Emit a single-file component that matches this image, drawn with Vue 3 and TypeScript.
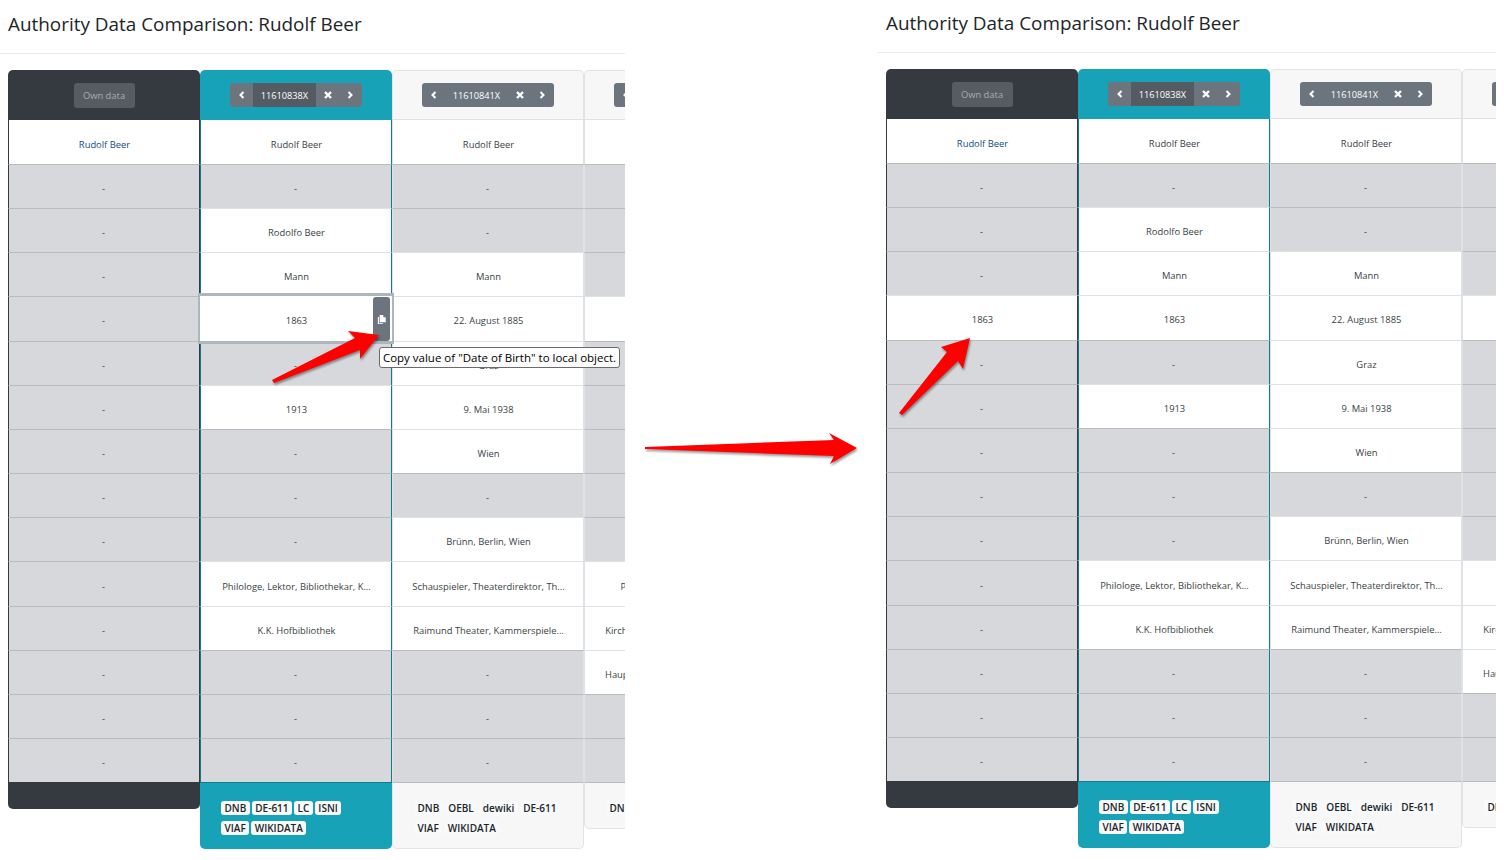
<script setup lang="ts">
interface Column {
  kind: 'own' | 'active' | 'plain'
  id?: string
  sources: string[][]
  values: (string | null)[]
}

const ownValues = ['Rudolf Beer', ...Array(14).fill('-')]

// the last column runs off the edge of the panel, only what shows is filled in
const baseColumns: Column[] = [
  { kind: 'active', id: '11610838X', sources: [['DNB', 'DE-611', 'LC', 'ISNI'], ['VIAF', 'WIKIDATA']],
    values: ['Rudolf Beer', '-', 'Rodolfo Beer', 'Mann', '1863', '-', '1913', '-', '-', '-', 'Philologe, Lektor, Bibliothekar, K...', 'K.K. Hofbibliothek', '-', '-', '-'] },
  { kind: 'plain', id: '11610841X', sources: [['DNB', 'OEBL', 'dewiki', 'DE-611'], ['VIAF', 'WIKIDATA']],
    values: ['Rudolf Beer', '-', '-', 'Mann', '22. August 1885', 'Graz', '9. Mai 1938', 'Wien', '-', 'Brünn, Berlin, Wien', 'Schauspieler, Theaterdirektor, Th...', 'Raimund Theater, Kammerspiele...', '-', '-', '-'] },
  { kind: 'plain', id: '', sources: [['DNB']],
    values: ['', null, null, null, '', null, null, null, null, null, 'Pädagoge und Schriftsteller', 'Kirchenmusiker, Organist, Musiker', 'Hauptschule und Musikschule Linz', null, null] }
]

const ownBefore: Column = { kind: 'own', sources: [], values: ownValues }
const ownAfter: Column = { kind: 'own', sources: [], values: ownValues.map((v, i) => (i === 4 ? '1863' : v)) }

const panels = [
  { key: 'before', columns: [ownBefore, ...baseColumns], hoverCell: true },
  { key: 'after', columns: [ownAfter, ...baseColumns], hoverCell: false }
]
</script>

<template>
  <div class="page">
    <section v-for="panel in panels" :key="panel.key" class="panel" :class="panel.key">
      <h1 class="title">Authority Data Comparison: Rudolf Beer</h1>
      <div class="compare">
        <div v-for="(col, c) in panel.columns" :key="c" class="column" :class="col.kind">
          <div class="head">
            <span v-if="col.kind === 'own'" class="own-btn">Own data</span>
            <div v-else class="btn-group">
              <span class="seg icon-seg">
                <svg viewBox="0 0 10 10"><path d="M6.5 2 3.5 5l3 3" /></svg>
              </span>
              <span class="seg id-seg">{{ col.id }}</span>
              <span class="seg icon-seg">
                <svg viewBox="0 0 10 10"><path d="M2 2l6 6M8 2 2 8" class="thick" /></svg>
              </span>
              <span class="seg icon-seg next">
                <svg viewBox="0 0 10 10"><path d="M3.5 2l3 3-3 3" /></svg>
              </span>
            </div>
          </div>
          <div
            v-for="(value, r) in col.values"
            :key="r"
            class="cell"
            :class="{
              empty: value === '-' || value === null,
              link: col.kind === 'own' && r === 0,
              hover: panel.hoverCell && c === 1 && r === 4
            }"
          >
            <span class="cell-text">{{ value }}</span>
            <span v-if="panel.hoverCell && c === 1 && r === 4" class="copy-btn">
              <svg viewBox="0 0 12 12"><path d="M4 1h4v2.6h2.6V9H4z" /><path d="M2 3.2h1.2V10h4.4v1H2z" /></svg>
            </span>
          </div>
          <div class="foot">
            <div v-for="(line, l) in col.sources" :key="l" class="badges">
              <span v-for="s in line" :key="s" class="badge">{{ s }}</span>
            </div>
          </div>
        </div>
      </div>
      <div v-if="panel.hoverCell" class="tooltip">Copy value of "Date of Birth" to local object.</div>
    </section>

    <svg class="arrows" viewBox="0 0 1504 860">
      <polygon points="272,380 355,338 348,331 379,335 360,359 360,350 274,383" />
      <polygon points="645,447 834,440 829,433 857,448 830,464 834,456 645,449" />
      <polygon points="899,413 947,352 941,347 970,338 963,369 958,361 902,415" />
    </svg>
  </div>
</template>

<style>
body {
  margin: 0;
  background: #fff;
}
</style>

<style scoped>
.page {
  position: relative;
  width: 1504px;
  height: 860px;
  overflow: hidden;
  display: flex;
  gap: 253px;
  font-family: "Open Sans", "Noto Sans", "Liberation Sans", sans-serif;
  color: #212529;
}

.panel {
  position: relative;
  height: 860px;
  overflow: hidden;
  flex-shrink: 0;
}

.panel.before {
  width: 625px;
}

.panel.after {
  width: 618px;
  margin-top: -1px;
}

.title {
  margin: 0;
  height: 54px;
  padding-left: 8px;
  box-sizing: border-box;
  border-bottom: 1px solid #e9ecef;
  font-size: 18.9px;
  font-weight: 400;
  line-height: 48px;
  white-space: nowrap;
}

.compare {
  display: flex;
  align-items: flex-start;
  padding: 16px 0 0 8px;
  width: 1000px;
}

.column {
  width: 192px;
  flex-shrink: 0;
  box-sizing: border-box;
  border-radius: 5px;
}

.head {
  height: 49.58px;
  box-sizing: border-box;
  display: flex;
  align-items: center;
  justify-content: center;
  border-radius: 5px 5px 0 0;
  font-size: 9.4px;
}

.own .head {
  background: #343a40;
}

.active .head {
  background: #17a2b8;
}

.plain .head {
  background: #f7f7f7;
  border: 1px solid #e3e3e3;
  border-bottom-color: #dee2e6;
}

.own-btn {
  width: 61px;
  height: 25px;
  line-height: 25px;
  text-align: center;
  border-radius: 3px;
  background: #565c62;
  color: #a8acb0;
  margin-top: 1px;
}

.btn-group {
  display: flex;
  height: 24px;
  margin-top: 1px;
  border-radius: 3px;
  overflow: hidden;
  background: #6c757d;
  color: #fff;
  font-size: 9.2px;
}

.seg {
  display: flex;
  align-items: center;
  justify-content: center;
}

.icon-seg {
  width: 23px;
}

.icon-seg.next {
  padding-right: 2px;
  box-sizing: border-box;
}

.icon-seg svg {
  width: 10px;
  height: 10px;
  fill: none;
  stroke: #fff;
  stroke-width: 2;
}

.icon-seg svg .thick {
  stroke-width: 2.4;
}

.id-seg {
  width: 63px;
}

.active .id-seg {
  background: #545b62;
}

.cell {
  position: relative;
  height: 44.19px;
  box-sizing: border-box;
  display: flex;
  align-items: center;
  justify-content: center;
  padding: 4px 0 0 1px;
  background: #fff;
  border-top: 1px solid #dee2e6;
  font-size: 9.4px;
  white-space: nowrap;
  overflow: hidden;
  color: #3a3f44;
}

.head + .cell {
  border-top: none;
  padding-top: 6px;
}

.cell.empty {
  background: #d6d8db;
  border-top-color: #b9bbbe;
  padding: 4px 1px 0 0;
}

.cell.link .cell-text {
  color: #0f4c81;
}

.own .cell {
  border-left: 1px solid #343a40;
  border-right: 1px solid #343a40;
}

.active .cell {
  border-left: 1px solid #117a8b;
  border-right: 1px solid #117a8b;
}

.plain .cell {
  border-right: 1px solid #dee2e6;
  border-left: 1px solid #dee2e6;
}

.cell.hover {
  overflow: visible;
  z-index: 2;
  box-shadow: 0 0 0 2px #adb5bd, 0 -1px 0 2px #adb5bd, 0 1px 0 2px #adb5bd;
  border-color: #fff;
}

.copy-btn {
  position: absolute;
  top: 0;
  right: 1px;
  width: 17px;
  height: 44px;
  display: flex;
  align-items: center;
  justify-content: center;
  border-radius: 3px;
  background: #6c757d;
}

.copy-btn svg {
  width: 11px;
  height: 11px;
  margin-top: 1px;
  fill: #fff;
}

.foot {
  box-sizing: border-box;
  padding: 17.6px 0 14.4px 21px;
  border-radius: 0 0 5px 5px;
  min-height: 26.6px;
}

.own .foot {
  background: #343a40;
  padding: 0;
}

.active .foot {
  background: #17a2b8;
  border-top: 1px solid #117a8b;
}

.plain .foot {
  background: #f7f7f7;
  border: 1px solid #e3e3e3;
  border-top: 1px solid #b9bbbe;
  padding-bottom: 13.4px;
}

.badges {
  display: flex;
  gap: 2px;
  height: 14px;
}

.badges + .badges {
  margin-top: 5.6px;
}

.badge {
  height: 14px;
  line-height: 14px;
  padding: 0 3.5px;
  border-radius: 3px;
  background: #f8f9fa;
  font-size: 10px;
  font-weight: 600;
  color: #212529;
}

.tooltip {
  position: absolute;
  z-index: 3;
  left: 379px;
  top: 347px;
  width: 241px;
  height: 21px;
  box-sizing: border-box;
  border: 1px solid #6b6b6b;
  border-radius: 3px;
  background: #fdfdfd;
  color: #000;
  font-size: 11.5px;
  line-height: 19px;
  text-align: center;
  white-space: nowrap;
}

.arrows {
  position: absolute;
  inset: 0;
  width: 1504px;
  height: 860px;
  z-index: 5;
  pointer-events: none;
  filter: drop-shadow(1px 2px 1px rgba(0, 0, 0, 0.4));
}

.arrows polygon {
  fill: #ff0000;
}
</style>
